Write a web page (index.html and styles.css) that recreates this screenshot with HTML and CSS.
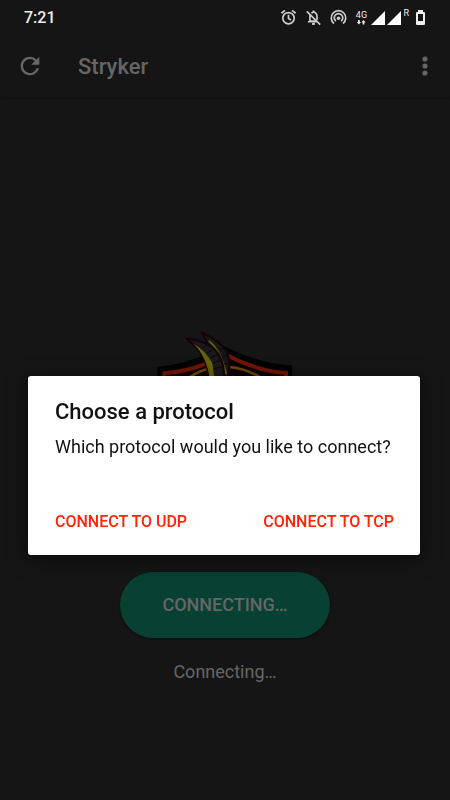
FILE: index.html
```
<!DOCTYPE html>
<html lang="en">
<head>
    <meta charset="UTF-8">
    <meta name="viewport" content="width=device-width, initial-scale=1.0">
    <title>Stryker</title>
    <link rel="stylesheet" href="styles.css">
</head>
<body>

    <div class="status-bar">
        <span class="clock">7:21</span>
        <div class="status-icons">
            <svg class="status-icon" viewBox="0 0 24 24" fill="none" stroke="currentColor" stroke-width="2.4">
                <circle cx="12" cy="13" r="8"/>
                <path d="M12 8v5.500l3.500 2M2 6 7 2M22 6 17 2"/>
            </svg>
            <svg class="status-icon" viewBox="0 0 24 24" fill="none" stroke="currentColor" stroke-width="2.4">
                <path d="M7 8.500V17h10M4 18h14M9 5.800C14 2.500 17 6.500 17 11v4M12 2v3M2.500 3.500 21.500 22"/>
                <path d="M10 21h4" stroke-width="3"/>
            </svg>
            <svg class="status-icon" viewBox="0 0 24 24" fill="none" stroke="currentColor" stroke-width="2.4">
                <path d="M5.600 20.500A10.200 10.200 0 1 1 18.400 20.500M8.300 17.200A6 6 0 1 1 15.700 17.200"/>
                <circle cx="12" cy="13" r="2.500" fill="currentColor" stroke="none"/>
            </svg>
            <span class="network">
                4G
                <svg class="arrows" viewBox="0 0 12 6" fill="currentColor">
                    <path d="M2.500 0h2v2.500H6L3.500 5.500 1 2.500h1.500zM8 5.500h2V3h1.500L9 0 6.500 3H8z"/>
                </svg>
            </span>
            <svg class="signal" viewBox="0 0 14 14" fill="currentColor"><path d="M14 0v14H0z"/></svg>
            <svg class="signal" viewBox="0 0 14 14" fill="currentColor"><path d="M14 0v14H0z"/></svg>
            <span class="roaming">R</span>
            <svg class="battery" viewBox="0 0 9 15">
                <path d="M2 0h5v2h1q1 0 1 1v11q0 1-1 1H1q-1 0-1-1V3q0-1 1-1h1zM2 4v7h5V4z" fill="currentColor" fill-rule="evenodd"/>
            </svg>
        </div>
    </div>

    <header class="app-bar">
        <button class="icon-button" aria-label="Refresh">
            <svg class="icon" viewBox="0 0 24 24" fill="currentColor">
                <path d="M17.65 6.35A7.96 7.96 0 0 0 12 4a8 8 0 1 0 7.730 10h-2.080A6 6 0 1 1 12 6c1.660 0 3.140.69 4.220 1.780L13 11h7V4z"/>
            </svg>
        </button>
        <h1 class="app-title">Stryker</h1>
        <button class="icon-button" aria-label="More options">
            <svg class="icon" viewBox="0 0 24 24" fill="currentColor">
                <circle cx="12" cy="6" r="2.200"/>
                <circle cx="12" cy="12" r="2.200"/>
                <circle cx="12" cy="18" r="2.200"/>
            </svg>
        </button>
    </header>

    <main class="content">
        <svg class="logo" viewBox="0 0 450 681">
            <!-- Shield -->
            <path d="M22 125Q110 120 224 64Q330 118 426 122V380Q400 560 224 670Q50 560 22 380z" fill="#000"/>
            <path d="M48 150Q130 142 224 100Q310 145 402 150V375Q380 530 224 630Q70 530 48 375z" fill="#0b0005"/>
            <path d="M43 375V145Q110 140 168 116M234 92Q320 138 408 144V375Q385 545 224 645Q65 545 43 375" fill="none" stroke="#701600" stroke-width="12"/>
            <path d="M100 170Q135 142 172 132M238 126Q290 130 345 165" fill="none" stroke="#6f4508" stroke-width="7"/>
            <!-- Horns -->
            <path d="M157 24Q218 52 232 84Q244 125 232 160H206Q198 100 157 24z" fill="#171717" stroke="#18000c" stroke-width="6"/>
            <path d="M176 48Q210 72 229 148" fill="none" stroke="#62600a" stroke-width="6"/>
            <path d="M108 40Q185 50 207 90Q225 120 222 165H180Q166 80 108 40z" fill="#191919" stroke="#18000c" stroke-width="6"/>
            <path d="M130 56Q164 74 187 114L194 165H180Q170 92 130 56z" fill="#66640b"/>
            <path d="M158 69L179 53M170 84L195 70M180 99L208 86M188 115L216 105M191 132L222 123M202 54L211 48M211 74L228 67M219 96L236 90M224 117L239 112" fill="none" stroke="#080808" stroke-width="3"/>
        </svg>
        <button class="connect-button">CONNECTING…</button>
        <p class="connect-status">Connecting…</p>
    </main>

    <div class="overlay">
        <div class="dialog" role="dialog" aria-labelledby="dialog-title">
            <h2 class="dialog-title" id="dialog-title">Choose a protocol</h2>
            <p class="dialog-text">Which protocol would you like to connect?</p>
            <div class="dialog-actions">
                <button class="dialog-button">CONNECT TO UDP</button>
                <button class="dialog-button">CONNECT TO TCP</button>
            </div>
        </div>
    </div>

</body>
</html>
```
FILE: styles.css
```
* {
    box-sizing: border-box;
}

body {
    display: flex;
    flex-direction: column;
    min-height: 100vh;
    margin: 0;
    background-color: #151515;
    color: #666;
    font-family: Roboto, sans-serif;
}

button {
    border: none;
    padding: 0;
    background: none;
    color: inherit;
    font-family: inherit;
    font-weight: 500;
    cursor: pointer;
}

.status-bar {
    display: flex;
    justify-content: space-between;
    align-items: center;
    height: 35px;
    padding: 0 25px 0 24px;
    color: #eee;
}

.clock {
    font-size: 16px;
    font-weight: 500;
}

.status-icons {
    display: flex;
    align-items: center;
}

.status-icon {
    width: 17px;
    height: 17px;
    margin-right: 8px;
    color: #ccc;
}

.network {
    display: flex;
    flex-direction: column;
    align-items: center;
    width: 12px;
    margin-right: 4px;
    font-size: 9px;
    line-height: 10px;
}

.arrows {
    width: 10px;
    height: 5px;
}

.signal {
    width: 14px;
    height: 14px;
    margin-right: 2px;
    color: #fff;
}

.roaming {
    align-self: flex-start;
    margin-right: 7px;
    font-size: 9px;
    line-height: 9px;
}

.battery {
    width: 9px;
    height: 15px;
}

.app-bar {
    display: flex;
    align-items: center;
    height: 62px;
    padding: 0 11px 0 16px;
    box-shadow: 0 1px 2px #111;
}

.icon-button {
    display: flex;
}

.icon {
    width: 28px;
    height: 28px;
}

.app-title {
    flex: 1;
    margin: 0 0 0 34px;
    font-size: 22px;
    font-weight: 500;
}

.content {
    display: flex;
    flex: 1;
    flex-direction: column;
    align-items: center;
    justify-content: flex-end;
    padding-bottom: 116px;
}

.logo {
    width: 150px;
    height: 227px;
    margin-bottom: 20px;
}

.connect-button {
    padding: 22px 42px;
    border-radius: 33px;
    background-color: #084034;
    font-size: 18px;
    line-height: 22px;
    box-shadow: 0 1px 2px #0c0c0c;
}

.connect-status {
    margin: 22px 0 0;
    font-size: 18px;
    line-height: 24px;
}

.overlay {
    position: fixed;
    inset: 0;
    display: flex;
    align-items: center;
    padding: 130px 30px 0 28px;
}

.dialog {
    flex: 1;
    padding: 22px 26px 22px 27px;
    border-radius: 3px;
    background-color: #fff;
    box-shadow: 0 4px 20px rgba(0, 0, 0, 0.5);
    color: #111;
}

.dialog-title {
    margin: 0 0 9px;
    font-size: 22px;
    font-weight: 500;
    line-height: 28px;
}

.dialog-text {
    margin: 0 0 52px;
    font-size: 18px;
    line-height: 24px;
}

.dialog-actions {
    display: flex;
    justify-content: space-between;
}

.dialog-button {
    color: #ff2308;
    font-size: 16px;
    line-height: 22px;
}
```
